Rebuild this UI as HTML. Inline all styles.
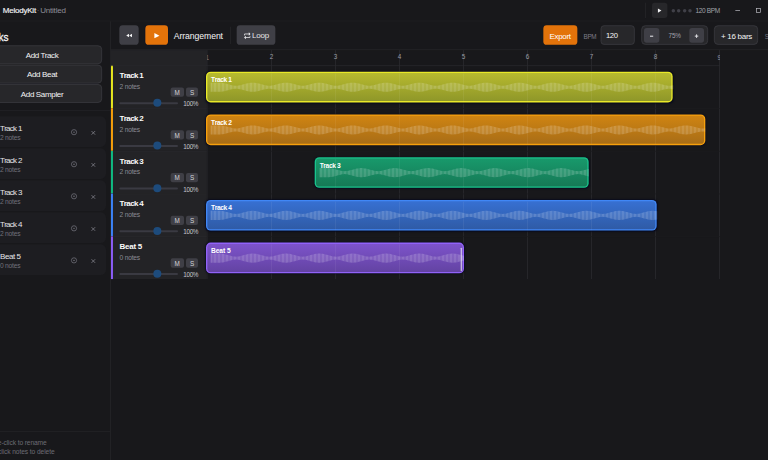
<!DOCTYPE html>
<html lang="en"><head><meta charset="utf-8"><title>MelodyKit - Untitled</title>
<style>
html,body{margin:0;padding:0;width:768px;height:460px;overflow:hidden;background:#18181b;}
#stage{position:absolute;left:0;top:0;width:1152px;height:689px;transform:scale(0.666667,0.667634);transform-origin:0 0;background:#18181b;overflow:hidden;font-family:"Liberation Sans", sans-serif;font-kerning:none;}
.a{position:absolute;}
.t{position:absolute;line-height:1;white-space:nowrap;}
</style></head><body><div id="stage">
<div class="a" style="left:0px;top:0px;width:1152px;height:32px;background:#18181b;"></div>
<div class="a" style="left:0px;top:31px;width:1152px;height:1px;background:#212125;"></div>
<div class="a" style="left:967.7px;top:4px;width:1px;height:23px;background:#27272a;"></div>
<div class="a" style="left:978px;top:4.3px;width:22.6px;height:22.3px;background:#27272a;border-radius:4px;"></div>
<svg class="a" style="left:986.3px;top:12.3px" width="7" height="8" viewBox="0 0 7 8"><path d="M0.8 0.6 L6.2 3.8 L0.8 7Z" fill="#f4f4f5"/></svg>
<svg class="a" style="left:1005.8px;top:12px" width="8" height="8"><circle cx="4" cy="4" r="2.6" fill="#404048"/></svg>
<svg class="a" style="left:1014.2px;top:12px" width="8" height="8"><circle cx="4" cy="4" r="2.6" fill="#404048"/></svg>
<svg class="a" style="left:1022.5px;top:12px" width="8" height="8"><circle cx="4" cy="4" r="2.6" fill="#404048"/></svg>
<svg class="a" style="left:1030.8px;top:12px" width="8" height="8"><circle cx="4" cy="4" r="2.6" fill="#404048"/></svg>
<div class="a" style="left:1102.5px;top:15.3px;width:7.5px;height:1.2px;background:#c0c0c8;"></div>
<div class="a" style="left:1133.7px;top:12px;width:7.6px;height:7.4px;border:1.3px solid #c0c0c8;box-sizing:border-box;"></div>
<div class="a" style="left:165px;top:32px;width:1px;height:658px;background:#27272a;"></div>
<div class="a" style="left:-26px;top:67.5px;width:178.5px;height:28.5px;background:#27272a;border:1px solid #3f3f46;border-radius:6px;box-sizing:border-box;"></div>
<div class="a" style="left:-26px;top:96.5px;width:178.5px;height:28.5px;background:#27272a;border:1px solid #3f3f46;border-radius:6px;box-sizing:border-box;"></div>
<div class="a" style="left:-26px;top:125.5px;width:178.5px;height:28.5px;background:#27272a;border:1px solid #3f3f46;border-radius:6px;box-sizing:border-box;"></div>
<div class="a" style="left:0px;top:165px;width:165px;height:1px;background:#232327;"></div>
<div class="a" style="left:-30px;top:174.4px;width:188.8px;height:46px;background:#1d1d21;border-radius:8px;"></div>
<svg class="a" style="left:105px;top:192px" width="12" height="12" viewBox="0 0 12 12"><circle cx="6" cy="6" r="3.9" fill="none" stroke="#7c7c86" stroke-width="1"/><circle cx="6" cy="6" r="1" fill="#7c7c86"/></svg>
<svg class="a" style="left:135.2px;top:194.2px" width="10" height="10" viewBox="0 0 10 10"><path d="M2.3 2.3L7.7 7.7M7.7 2.3L2.3 7.7" stroke="#8a8a94" stroke-width="1.1" fill="none"/></svg>
<div class="a" style="left:-30px;top:222.4px;width:188.8px;height:46px;background:#1d1d21;border-radius:8px;"></div>
<svg class="a" style="left:105px;top:240px" width="12" height="12" viewBox="0 0 12 12"><circle cx="6" cy="6" r="3.9" fill="none" stroke="#7c7c86" stroke-width="1"/><circle cx="6" cy="6" r="1" fill="#7c7c86"/></svg>
<svg class="a" style="left:135.2px;top:242.2px" width="10" height="10" viewBox="0 0 10 10"><path d="M2.3 2.3L7.7 7.7M7.7 2.3L2.3 7.7" stroke="#8a8a94" stroke-width="1.1" fill="none"/></svg>
<div class="a" style="left:-30px;top:270.4px;width:188.8px;height:46px;background:#1d1d21;border-radius:8px;"></div>
<svg class="a" style="left:105px;top:288px" width="12" height="12" viewBox="0 0 12 12"><circle cx="6" cy="6" r="3.9" fill="none" stroke="#7c7c86" stroke-width="1"/><circle cx="6" cy="6" r="1" fill="#7c7c86"/></svg>
<svg class="a" style="left:135.2px;top:290.2px" width="10" height="10" viewBox="0 0 10 10"><path d="M2.3 2.3L7.7 7.7M7.7 2.3L2.3 7.7" stroke="#8a8a94" stroke-width="1.1" fill="none"/></svg>
<div class="a" style="left:-30px;top:318.4px;width:188.8px;height:46px;background:#1d1d21;border-radius:8px;"></div>
<svg class="a" style="left:105px;top:336px" width="12" height="12" viewBox="0 0 12 12"><circle cx="6" cy="6" r="3.9" fill="none" stroke="#7c7c86" stroke-width="1"/><circle cx="6" cy="6" r="1" fill="#7c7c86"/></svg>
<svg class="a" style="left:135.2px;top:338.2px" width="10" height="10" viewBox="0 0 10 10"><path d="M2.3 2.3L7.7 7.7M7.7 2.3L2.3 7.7" stroke="#8a8a94" stroke-width="1.1" fill="none"/></svg>
<div class="a" style="left:-30px;top:366.4px;width:188.8px;height:46px;background:#1d1d21;border-radius:8px;"></div>
<svg class="a" style="left:105px;top:384px" width="12" height="12" viewBox="0 0 12 12"><circle cx="6" cy="6" r="3.9" fill="none" stroke="#7c7c86" stroke-width="1"/><circle cx="6" cy="6" r="1" fill="#7c7c86"/></svg>
<svg class="a" style="left:135.2px;top:386.2px" width="10" height="10" viewBox="0 0 10 10"><path d="M2.3 2.3L7.7 7.7M7.7 2.3L2.3 7.7" stroke="#8a8a94" stroke-width="1.1" fill="none"/></svg>
<div class="a" style="left:0px;top:646px;width:165px;height:1px;background:#242428;"></div>
<div class="a" style="left:166px;top:73.6px;width:986px;height:1px;background:#27272a;"></div>
<div class="a" style="left:178.6px;top:38.4px;width:29.8px;height:29px;background:#3f3f46;border-radius:5px;"></div>
<svg class="a" style="left:188.6px;top:49.9px" width="9.4" height="6.4" viewBox="0 0 11 7"><path d="M5.3 0.3V6.7L0.4 3.5Z M10.6 0.3V6.7L5.7 3.5Z" fill="#f4f4f5"/></svg>
<div class="a" style="left:217.5px;top:38.4px;width:34.5px;height:29px;background:#e3730a;border-radius:5px;box-shadow:0 0 0 1px #101424;"></div>
<svg class="a" style="left:230.5px;top:48.8px" width="9" height="9" viewBox="0 0 9 9"><path d="M0.6 0.6 L8.2 4.5 L0.6 8.4Z" fill="#fff"/></svg>
<div class="a" style="left:345.2px;top:40px;width:1px;height:26px;background:#27272a;"></div>
<div class="a" style="left:355.4px;top:38.4px;width:57.2px;height:29px;background:#3f3f46;border-radius:5px;"></div>
<svg class="a" style="left:366.2px;top:47.6px" width="10" height="11" viewBox="0 0 10 10" preserveAspectRatio="none"><g fill="none" stroke="#ededf0" stroke-width="1.1"><path d="M0.8 4.6V2.6H7.6"/><path d="M9.2 5.4V7.4H2.4"/></g><path d="M7.2 0.3L9.9 2.6L7.2 4.9Z M2.8 5.1L0.1 7.4L2.8 9.7Z" fill="#ededf0"/></svg>
<div class="a" style="left:814.5px;top:38.2px;width:51.6px;height:29.3px;background:#e3730a;border-radius:5px;"></div>
<div class="a" style="left:901px;top:38.2px;width:51px;height:29.3px;background:#27272a;border:1px solid #3f3f46;border-radius:5px;box-sizing:border-box;"></div>
<div class="a" style="left:962px;top:38.2px;width:99.6px;height:29.3px;background:#27272a;border:1px solid #3f3f46;border-radius:6px;box-sizing:border-box;"></div>
<div class="a" style="left:966.4px;top:42px;width:22.2px;height:22px;background:#3f3f46;border-radius:4px;"></div>
<div class="a" style="left:1033.6px;top:42px;width:22.4px;height:22px;background:#3f3f46;border-radius:4px;"></div>
<svg class="a" style="left:972px;top:48px" width="12" height="12"><rect x="3" y="5.4" width="4.8" height="1.7" fill="#d8d8dc"/></svg>
<svg class="a" style="left:1039px;top:48px" width="12" height="12"><rect x="3.2" y="5.3" width="5.2" height="1.6" fill="#d8d8dc"/><rect x="5" y="3.5" width="1.6" height="5.2" fill="#d8d8dc"/></svg>
<div class="a" style="left:1071.3px;top:38.2px;width:65.8px;height:29.3px;background:#27272a;border:1px solid #3f3f46;border-radius:6px;box-sizing:border-box;"></div>
<div class="a" style="left:166px;top:75px;width:144px;height:23px;background:#232326;"></div>
<div class="a" style="left:310px;top:75px;width:1px;height:343px;background:#2f2f35;"></div>
<div class="a" style="left:311px;top:75px;width:20px;height:23px;overflow:hidden"><span class="t" style="left:-2.6px;top:6.68px;font-size:9.5px;color:#9c9ca6">1</span></div>
<div class="a" style="left:407px;top:75px;width:1px;height:343px;background:#2d2d32;"></div>
<div class="a" style="left:503px;top:75px;width:1px;height:343px;background:#2d2d32;"></div>
<div class="a" style="left:599px;top:75px;width:1px;height:343px;background:#2d2d32;"></div>
<div class="a" style="left:695px;top:75px;width:1px;height:343px;background:#2d2d32;"></div>
<div class="a" style="left:791px;top:75px;width:1px;height:343px;background:#2d2d32;"></div>
<div class="a" style="left:887px;top:75px;width:1px;height:343px;background:#2d2d32;"></div>
<div class="a" style="left:983px;top:75px;width:1px;height:343px;background:#2d2d32;"></div>
<div class="a" style="left:1079px;top:75px;width:1px;height:343px;background:#2d2d32;"></div>
<div class="a" style="left:1059px;top:75px;width:20.6px;height:23px;overflow:hidden"><span class="t" style="left:17.4px;top:6.68px;font-size:9.5px;color:#9c9ca6">9</span></div>
<svg width="0" height="0" style="position:absolute"><defs><pattern id="st" width="2" height="40" patternUnits="userSpaceOnUse"><rect x="0" y="0" width="1.15" height="40" fill="#fff" fill-opacity="0.24"/><rect x="1.15" y="0" width="0.85" height="40" fill="#fff" fill-opacity="0.06"/></pattern></defs></svg>
<div class="a" style="left:166px;top:98px;width:144px;height:64px;background:#232326;"></div>
<div class="a" style="left:166px;top:98px;width:3px;height:64px;background:#e6e61f;transform:translateX(0.45px);"></div>
<div class="a" style="left:166px;top:98px;width:914px;height:1px;background:#2b2b30;"></div>
<div class="a" style="left:256px;top:131.3px;width:19.7px;height:14.2px;background:#3f3f46;border-radius:3px;"></div>
<div class="a" style="left:279.4px;top:131.3px;width:17.8px;height:14.2px;background:#3f3f46;border-radius:3px;"></div>
<div class="a" style="left:179.4px;top:152.6px;width:87.6px;height:3px;background:#3a3a42;border-radius:2px;"></div>
<div class="a" style="left:230.3px;top:148.4px;width:11.4px;height:11.4px;background:#1d4b7c;border-radius:6px;"></div>
<div class="a" style="left:309px;top:108px;width:700px;height:46px;border-radius:7px;background:#e9e928;box-shadow:0 0.5px 2px 0.5px rgba(6,8,30,0.75);transform:translateY(-0.6px);"></div>
<div class="a" style="left:311px;top:110px;width:696px;height:42px;border-radius:5px;background:linear-gradient(to bottom,#b7ba2f,#8f9729);transform:translateY(-0.6px);"></div>
<svg class="a" style="left:309px;top:108px;overflow:visible" width="703" height="46" viewBox="0 0 703 46"><path d="M7.0 15.80 L9.0 15.80 L11.0 15.80 L13.0 15.80 L15.0 15.80 L17.0 15.80 L19.0 15.80 L21.0 15.82 L23.0 15.95 L25.0 16.20 L27.0 16.56 L29.0 17.01 L31.0 17.52 L33.0 18.07 L35.0 18.63 L37.0 19.16 L39.0 19.64 L41.0 20.02 L43.0 20.29 L45.0 20.40 L47.0 20.29 L49.0 20.02 L51.0 19.64 L53.0 19.16 L55.0 18.63 L57.0 18.07 L59.0 17.52 L61.0 17.01 L63.0 16.56 L65.0 16.20 L67.0 15.95 L69.0 15.82 L71.0 15.82 L73.0 15.95 L75.0 16.20 L77.0 16.56 L79.0 17.01 L81.0 17.52 L83.0 18.07 L85.0 18.63 L87.0 19.16 L89.0 19.64 L91.0 20.02 L93.0 20.29 L95.0 20.40 L97.0 20.29 L99.0 20.02 L101.0 19.64 L103.0 19.16 L105.0 18.63 L107.0 18.07 L109.0 17.52 L111.0 17.01 L113.0 16.56 L115.0 16.20 L117.0 15.95 L119.0 15.82 L121.0 15.82 L123.0 15.95 L125.0 16.20 L127.0 16.56 L129.0 17.01 L131.0 17.52 L133.0 18.07 L135.0 18.63 L137.0 19.16 L139.0 19.64 L141.0 20.02 L143.0 20.29 L145.0 20.40 L147.0 20.29 L149.0 20.02 L151.0 19.64 L153.0 19.16 L155.0 18.63 L157.0 18.07 L159.0 17.52 L161.0 17.01 L163.0 16.56 L165.0 16.20 L167.0 15.95 L169.0 15.82 L171.0 15.82 L173.0 15.95 L175.0 16.20 L177.0 16.56 L179.0 17.01 L181.0 17.52 L183.0 18.07 L185.0 18.63 L187.0 19.16 L189.0 19.64 L191.0 20.02 L193.0 20.29 L195.0 20.40 L197.0 20.29 L199.0 20.02 L201.0 19.64 L203.0 19.16 L205.0 18.63 L207.0 18.07 L209.0 17.52 L211.0 17.01 L213.0 16.56 L215.0 16.20 L217.0 15.95 L219.0 15.82 L221.0 15.82 L223.0 15.95 L225.0 16.20 L227.0 16.56 L229.0 17.01 L231.0 17.52 L233.0 18.07 L235.0 18.63 L237.0 19.16 L239.0 19.64 L241.0 20.02 L243.0 20.29 L245.0 20.40 L247.0 20.29 L249.0 20.02 L251.0 19.64 L253.0 19.16 L255.0 18.63 L257.0 18.07 L259.0 17.52 L261.0 17.01 L263.0 16.56 L265.0 16.20 L267.0 15.95 L269.0 15.82 L271.0 15.82 L273.0 15.95 L275.0 16.20 L277.0 16.56 L279.0 17.01 L281.0 17.52 L283.0 18.07 L285.0 18.63 L287.0 19.16 L289.0 19.64 L291.0 20.02 L293.0 20.29 L295.0 20.40 L297.0 20.29 L299.0 20.02 L301.0 19.64 L303.0 19.16 L305.0 18.63 L307.0 18.07 L309.0 17.52 L311.0 17.01 L313.0 16.56 L315.0 16.20 L317.0 15.95 L319.0 15.82 L321.0 15.82 L323.0 15.95 L325.0 16.20 L327.0 16.56 L329.0 17.01 L331.0 17.52 L333.0 18.07 L335.0 18.63 L337.0 19.16 L339.0 19.64 L341.0 20.02 L343.0 20.29 L345.0 20.40 L347.0 20.29 L349.0 20.02 L351.0 19.64 L353.0 19.16 L355.0 18.63 L357.0 18.07 L359.0 17.52 L361.0 17.01 L363.0 16.56 L365.0 16.20 L367.0 15.95 L369.0 15.82 L371.0 15.82 L373.0 15.95 L375.0 16.20 L377.0 16.56 L379.0 17.01 L381.0 17.52 L383.0 18.07 L385.0 18.63 L387.0 19.16 L389.0 19.64 L391.0 20.02 L393.0 20.29 L395.0 20.40 L397.0 20.29 L399.0 20.02 L401.0 19.64 L403.0 19.16 L405.0 18.63 L407.0 18.07 L409.0 17.52 L411.0 17.01 L413.0 16.56 L415.0 16.20 L417.0 15.95 L419.0 15.82 L421.0 15.82 L423.0 15.95 L425.0 16.20 L427.0 16.56 L429.0 17.01 L431.0 17.52 L433.0 18.07 L435.0 18.63 L437.0 19.16 L439.0 19.64 L441.0 20.02 L443.0 20.29 L445.0 20.40 L447.0 20.29 L449.0 20.02 L451.0 19.64 L453.0 19.16 L455.0 18.63 L457.0 18.07 L459.0 17.52 L461.0 17.01 L463.0 16.56 L465.0 16.20 L467.0 15.95 L469.0 15.82 L471.0 15.82 L473.0 15.95 L475.0 16.20 L477.0 16.56 L479.0 17.01 L481.0 17.52 L483.0 18.07 L485.0 18.63 L487.0 19.16 L489.0 19.64 L491.0 20.02 L493.0 20.29 L495.0 20.40 L497.0 20.29 L499.0 20.02 L501.0 19.64 L503.0 19.16 L505.0 18.63 L507.0 18.07 L509.0 17.52 L511.0 17.01 L513.0 16.56 L515.0 16.20 L517.0 15.95 L519.0 15.82 L521.0 15.82 L523.0 15.95 L525.0 16.20 L527.0 16.56 L529.0 17.01 L531.0 17.52 L533.0 18.07 L535.0 18.63 L537.0 19.16 L539.0 19.64 L541.0 20.02 L543.0 20.29 L545.0 20.40 L547.0 20.29 L549.0 20.02 L551.0 19.64 L553.0 19.16 L555.0 18.63 L557.0 18.07 L559.0 17.52 L561.0 17.01 L563.0 16.56 L565.0 16.20 L567.0 15.95 L569.0 15.82 L571.0 15.82 L573.0 15.95 L575.0 16.20 L577.0 16.56 L579.0 17.01 L581.0 17.52 L583.0 18.07 L585.0 18.63 L587.0 19.16 L589.0 19.64 L591.0 20.02 L593.0 20.29 L595.0 20.40 L597.0 20.29 L599.0 20.02 L601.0 19.64 L603.0 19.16 L605.0 18.63 L607.0 18.07 L609.0 17.52 L611.0 17.01 L613.0 16.56 L615.0 16.20 L617.0 15.95 L619.0 15.82 L621.0 15.82 L623.0 15.95 L625.0 16.20 L627.0 16.56 L629.0 17.01 L631.0 17.52 L633.0 18.07 L635.0 18.63 L637.0 19.16 L639.0 19.64 L641.0 20.02 L643.0 20.29 L645.0 20.40 L647.0 20.29 L649.0 20.02 L651.0 19.64 L653.0 19.16 L655.0 18.63 L657.0 18.07 L659.0 17.52 L661.0 17.01 L663.0 16.56 L665.0 16.20 L667.0 15.95 L669.0 15.82 L671.0 15.82 L673.0 15.95 L675.0 16.20 L677.0 16.56 L679.0 17.01 L681.0 17.52 L683.0 18.07 L685.0 18.63 L687.0 19.16 L689.0 19.64 L691.0 20.02 L693.0 20.29 L695.0 20.40 L697.0 20.29 L699.0 20.02 L701.0 19.64 L701.0 25.56 L699.0 25.18 L697.0 24.91 L695.0 24.80 L693.0 24.91 L691.0 25.18 L689.0 25.56 L687.0 26.04 L685.0 26.57 L683.0 27.13 L681.0 27.68 L679.0 28.19 L677.0 28.64 L675.0 29.00 L673.0 29.25 L671.0 29.38 L669.0 29.38 L667.0 29.25 L665.0 29.00 L663.0 28.64 L661.0 28.19 L659.0 27.68 L657.0 27.13 L655.0 26.57 L653.0 26.04 L651.0 25.56 L649.0 25.18 L647.0 24.91 L645.0 24.80 L643.0 24.91 L641.0 25.18 L639.0 25.56 L637.0 26.04 L635.0 26.57 L633.0 27.13 L631.0 27.68 L629.0 28.19 L627.0 28.64 L625.0 29.00 L623.0 29.25 L621.0 29.38 L619.0 29.38 L617.0 29.25 L615.0 29.00 L613.0 28.64 L611.0 28.19 L609.0 27.68 L607.0 27.13 L605.0 26.57 L603.0 26.04 L601.0 25.56 L599.0 25.18 L597.0 24.91 L595.0 24.80 L593.0 24.91 L591.0 25.18 L589.0 25.56 L587.0 26.04 L585.0 26.57 L583.0 27.13 L581.0 27.68 L579.0 28.19 L577.0 28.64 L575.0 29.00 L573.0 29.25 L571.0 29.38 L569.0 29.38 L567.0 29.25 L565.0 29.00 L563.0 28.64 L561.0 28.19 L559.0 27.68 L557.0 27.13 L555.0 26.57 L553.0 26.04 L551.0 25.56 L549.0 25.18 L547.0 24.91 L545.0 24.80 L543.0 24.91 L541.0 25.18 L539.0 25.56 L537.0 26.04 L535.0 26.57 L533.0 27.13 L531.0 27.68 L529.0 28.19 L527.0 28.64 L525.0 29.00 L523.0 29.25 L521.0 29.38 L519.0 29.38 L517.0 29.25 L515.0 29.00 L513.0 28.64 L511.0 28.19 L509.0 27.68 L507.0 27.13 L505.0 26.57 L503.0 26.04 L501.0 25.56 L499.0 25.18 L497.0 24.91 L495.0 24.80 L493.0 24.91 L491.0 25.18 L489.0 25.56 L487.0 26.04 L485.0 26.57 L483.0 27.13 L481.0 27.68 L479.0 28.19 L477.0 28.64 L475.0 29.00 L473.0 29.25 L471.0 29.38 L469.0 29.38 L467.0 29.25 L465.0 29.00 L463.0 28.64 L461.0 28.19 L459.0 27.68 L457.0 27.13 L455.0 26.57 L453.0 26.04 L451.0 25.56 L449.0 25.18 L447.0 24.91 L445.0 24.80 L443.0 24.91 L441.0 25.18 L439.0 25.56 L437.0 26.04 L435.0 26.57 L433.0 27.13 L431.0 27.68 L429.0 28.19 L427.0 28.64 L425.0 29.00 L423.0 29.25 L421.0 29.38 L419.0 29.38 L417.0 29.25 L415.0 29.00 L413.0 28.64 L411.0 28.19 L409.0 27.68 L407.0 27.13 L405.0 26.57 L403.0 26.04 L401.0 25.56 L399.0 25.18 L397.0 24.91 L395.0 24.80 L393.0 24.91 L391.0 25.18 L389.0 25.56 L387.0 26.04 L385.0 26.57 L383.0 27.13 L381.0 27.68 L379.0 28.19 L377.0 28.64 L375.0 29.00 L373.0 29.25 L371.0 29.38 L369.0 29.38 L367.0 29.25 L365.0 29.00 L363.0 28.64 L361.0 28.19 L359.0 27.68 L357.0 27.13 L355.0 26.57 L353.0 26.04 L351.0 25.56 L349.0 25.18 L347.0 24.91 L345.0 24.80 L343.0 24.91 L341.0 25.18 L339.0 25.56 L337.0 26.04 L335.0 26.57 L333.0 27.13 L331.0 27.68 L329.0 28.19 L327.0 28.64 L325.0 29.00 L323.0 29.25 L321.0 29.38 L319.0 29.38 L317.0 29.25 L315.0 29.00 L313.0 28.64 L311.0 28.19 L309.0 27.68 L307.0 27.13 L305.0 26.57 L303.0 26.04 L301.0 25.56 L299.0 25.18 L297.0 24.91 L295.0 24.80 L293.0 24.91 L291.0 25.18 L289.0 25.56 L287.0 26.04 L285.0 26.57 L283.0 27.13 L281.0 27.68 L279.0 28.19 L277.0 28.64 L275.0 29.00 L273.0 29.25 L271.0 29.38 L269.0 29.38 L267.0 29.25 L265.0 29.00 L263.0 28.64 L261.0 28.19 L259.0 27.68 L257.0 27.13 L255.0 26.57 L253.0 26.04 L251.0 25.56 L249.0 25.18 L247.0 24.91 L245.0 24.80 L243.0 24.91 L241.0 25.18 L239.0 25.56 L237.0 26.04 L235.0 26.57 L233.0 27.13 L231.0 27.68 L229.0 28.19 L227.0 28.64 L225.0 29.00 L223.0 29.25 L221.0 29.38 L219.0 29.38 L217.0 29.25 L215.0 29.00 L213.0 28.64 L211.0 28.19 L209.0 27.68 L207.0 27.13 L205.0 26.57 L203.0 26.04 L201.0 25.56 L199.0 25.18 L197.0 24.91 L195.0 24.80 L193.0 24.91 L191.0 25.18 L189.0 25.56 L187.0 26.04 L185.0 26.57 L183.0 27.13 L181.0 27.68 L179.0 28.19 L177.0 28.64 L175.0 29.00 L173.0 29.25 L171.0 29.38 L169.0 29.38 L167.0 29.25 L165.0 29.00 L163.0 28.64 L161.0 28.19 L159.0 27.68 L157.0 27.13 L155.0 26.57 L153.0 26.04 L151.0 25.56 L149.0 25.18 L147.0 24.91 L145.0 24.80 L143.0 24.91 L141.0 25.18 L139.0 25.56 L137.0 26.04 L135.0 26.57 L133.0 27.13 L131.0 27.68 L129.0 28.19 L127.0 28.64 L125.0 29.00 L123.0 29.25 L121.0 29.38 L119.0 29.38 L117.0 29.25 L115.0 29.00 L113.0 28.64 L111.0 28.19 L109.0 27.68 L107.0 27.13 L105.0 26.57 L103.0 26.04 L101.0 25.56 L99.0 25.18 L97.0 24.91 L95.0 24.80 L93.0 24.91 L91.0 25.18 L89.0 25.56 L87.0 26.04 L85.0 26.57 L83.0 27.13 L81.0 27.68 L79.0 28.19 L77.0 28.64 L75.0 29.00 L73.0 29.25 L71.0 29.38 L69.0 29.38 L67.0 29.25 L65.0 29.00 L63.0 28.64 L61.0 28.19 L59.0 27.68 L57.0 27.13 L55.0 26.57 L53.0 26.04 L51.0 25.56 L49.0 25.18 L47.0 24.91 L45.0 24.80 L43.0 24.91 L41.0 25.18 L39.0 25.56 L37.0 26.04 L35.0 26.57 L33.0 27.13 L31.0 27.68 L29.0 28.19 L27.0 28.64 L25.0 29.00 L23.0 29.25 L21.0 29.38 L19.0 29.40 L17.0 29.40 L15.0 29.40 L13.0 29.40 L11.0 29.40 L9.0 29.40 L7.0 29.40Z" fill="url(#st)"/></svg>
<div class="a" style="left:407px;top:110px;width:1px;height:42px;background:rgba(255,255,255,0.09);"></div>
<div class="a" style="left:503px;top:110px;width:1px;height:42px;background:rgba(255,255,255,0.09);"></div>
<div class="a" style="left:599px;top:110px;width:1px;height:42px;background:rgba(255,255,255,0.09);"></div>
<div class="a" style="left:695px;top:110px;width:1px;height:42px;background:rgba(255,255,255,0.09);"></div>
<div class="a" style="left:791px;top:110px;width:1px;height:42px;background:rgba(255,255,255,0.09);"></div>
<div class="a" style="left:887px;top:110px;width:1px;height:42px;background:rgba(255,255,255,0.09);"></div>
<div class="a" style="left:983px;top:110px;width:1px;height:42px;background:rgba(255,255,255,0.09);"></div>
<div class="a" style="left:166px;top:162px;width:144px;height:64px;background:#232326;"></div>
<div class="a" style="left:166px;top:162px;width:3px;height:64px;background:#f59e0b;transform:translateX(0.45px);"></div>
<div class="a" style="left:170px;top:162px;width:140px;height:1px;background:#29292d;"></div>
<div class="a" style="left:312px;top:162px;width:768px;height:1px;background:#1b1b1e;"></div>
<div class="a" style="left:256px;top:195.3px;width:19.7px;height:14.2px;background:#3f3f46;border-radius:3px;"></div>
<div class="a" style="left:279.4px;top:195.3px;width:17.8px;height:14.2px;background:#3f3f46;border-radius:3px;"></div>
<div class="a" style="left:179.4px;top:216.6px;width:87.6px;height:3px;background:#3a3a42;border-radius:2px;"></div>
<div class="a" style="left:230.3px;top:212.4px;width:11.4px;height:11.4px;background:#1d4b7c;border-radius:6px;"></div>
<div class="a" style="left:309px;top:172px;width:749px;height:46px;border-radius:7px;background:#f7a00c;box-shadow:0 0.5px 2px 0.5px rgba(6,8,30,0.75);transform:translateY(-0.6px);"></div>
<div class="a" style="left:311px;top:174px;width:745px;height:42px;border-radius:5px;background:linear-gradient(to bottom,#cf8412,#a86d17);transform:translateY(-0.6px);"></div>
<svg class="a" style="left:309px;top:172px;overflow:visible" width="752" height="46" viewBox="0 0 752 46"><path d="M7.0 15.80 L9.0 15.80 L11.0 15.80 L13.0 15.80 L15.0 15.80 L17.0 15.80 L19.0 15.80 L21.0 15.82 L23.0 15.95 L25.0 16.20 L27.0 16.56 L29.0 17.01 L31.0 17.52 L33.0 18.07 L35.0 18.63 L37.0 19.16 L39.0 19.64 L41.0 20.02 L43.0 20.29 L45.0 20.40 L47.0 20.29 L49.0 20.02 L51.0 19.64 L53.0 19.16 L55.0 18.63 L57.0 18.07 L59.0 17.52 L61.0 17.01 L63.0 16.56 L65.0 16.20 L67.0 15.95 L69.0 15.82 L71.0 15.82 L73.0 15.95 L75.0 16.20 L77.0 16.56 L79.0 17.01 L81.0 17.52 L83.0 18.07 L85.0 18.63 L87.0 19.16 L89.0 19.64 L91.0 20.02 L93.0 20.29 L95.0 20.40 L97.0 20.29 L99.0 20.02 L101.0 19.64 L103.0 19.16 L105.0 18.63 L107.0 18.07 L109.0 17.52 L111.0 17.01 L113.0 16.56 L115.0 16.20 L117.0 15.95 L119.0 15.82 L121.0 15.82 L123.0 15.95 L125.0 16.20 L127.0 16.56 L129.0 17.01 L131.0 17.52 L133.0 18.07 L135.0 18.63 L137.0 19.16 L139.0 19.64 L141.0 20.02 L143.0 20.29 L145.0 20.40 L147.0 20.29 L149.0 20.02 L151.0 19.64 L153.0 19.16 L155.0 18.63 L157.0 18.07 L159.0 17.52 L161.0 17.01 L163.0 16.56 L165.0 16.20 L167.0 15.95 L169.0 15.82 L171.0 15.82 L173.0 15.95 L175.0 16.20 L177.0 16.56 L179.0 17.01 L181.0 17.52 L183.0 18.07 L185.0 18.63 L187.0 19.16 L189.0 19.64 L191.0 20.02 L193.0 20.29 L195.0 20.40 L197.0 20.29 L199.0 20.02 L201.0 19.64 L203.0 19.16 L205.0 18.63 L207.0 18.07 L209.0 17.52 L211.0 17.01 L213.0 16.56 L215.0 16.20 L217.0 15.95 L219.0 15.82 L221.0 15.82 L223.0 15.95 L225.0 16.20 L227.0 16.56 L229.0 17.01 L231.0 17.52 L233.0 18.07 L235.0 18.63 L237.0 19.16 L239.0 19.64 L241.0 20.02 L243.0 20.29 L245.0 20.40 L247.0 20.29 L249.0 20.02 L251.0 19.64 L253.0 19.16 L255.0 18.63 L257.0 18.07 L259.0 17.52 L261.0 17.01 L263.0 16.56 L265.0 16.20 L267.0 15.95 L269.0 15.82 L271.0 15.82 L273.0 15.95 L275.0 16.20 L277.0 16.56 L279.0 17.01 L281.0 17.52 L283.0 18.07 L285.0 18.63 L287.0 19.16 L289.0 19.64 L291.0 20.02 L293.0 20.29 L295.0 20.40 L297.0 20.29 L299.0 20.02 L301.0 19.64 L303.0 19.16 L305.0 18.63 L307.0 18.07 L309.0 17.52 L311.0 17.01 L313.0 16.56 L315.0 16.20 L317.0 15.95 L319.0 15.82 L321.0 15.82 L323.0 15.95 L325.0 16.20 L327.0 16.56 L329.0 17.01 L331.0 17.52 L333.0 18.07 L335.0 18.63 L337.0 19.16 L339.0 19.64 L341.0 20.02 L343.0 20.29 L345.0 20.40 L347.0 20.29 L349.0 20.02 L351.0 19.64 L353.0 19.16 L355.0 18.63 L357.0 18.07 L359.0 17.52 L361.0 17.01 L363.0 16.56 L365.0 16.20 L367.0 15.95 L369.0 15.82 L371.0 15.82 L373.0 15.95 L375.0 16.20 L377.0 16.56 L379.0 17.01 L381.0 17.52 L383.0 18.07 L385.0 18.63 L387.0 19.16 L389.0 19.64 L391.0 20.02 L393.0 20.29 L395.0 20.40 L397.0 20.29 L399.0 20.02 L401.0 19.64 L403.0 19.16 L405.0 18.63 L407.0 18.07 L409.0 17.52 L411.0 17.01 L413.0 16.56 L415.0 16.20 L417.0 15.95 L419.0 15.82 L421.0 15.82 L423.0 15.95 L425.0 16.20 L427.0 16.56 L429.0 17.01 L431.0 17.52 L433.0 18.07 L435.0 18.63 L437.0 19.16 L439.0 19.64 L441.0 20.02 L443.0 20.29 L445.0 20.40 L447.0 20.29 L449.0 20.02 L451.0 19.64 L453.0 19.16 L455.0 18.63 L457.0 18.07 L459.0 17.52 L461.0 17.01 L463.0 16.56 L465.0 16.20 L467.0 15.95 L469.0 15.82 L471.0 15.82 L473.0 15.95 L475.0 16.20 L477.0 16.56 L479.0 17.01 L481.0 17.52 L483.0 18.07 L485.0 18.63 L487.0 19.16 L489.0 19.64 L491.0 20.02 L493.0 20.29 L495.0 20.40 L497.0 20.29 L499.0 20.02 L501.0 19.64 L503.0 19.16 L505.0 18.63 L507.0 18.07 L509.0 17.52 L511.0 17.01 L513.0 16.56 L515.0 16.20 L517.0 15.95 L519.0 15.82 L521.0 15.82 L523.0 15.95 L525.0 16.20 L527.0 16.56 L529.0 17.01 L531.0 17.52 L533.0 18.07 L535.0 18.63 L537.0 19.16 L539.0 19.64 L541.0 20.02 L543.0 20.29 L545.0 20.40 L547.0 20.29 L549.0 20.02 L551.0 19.64 L553.0 19.16 L555.0 18.63 L557.0 18.07 L559.0 17.52 L561.0 17.01 L563.0 16.56 L565.0 16.20 L567.0 15.95 L569.0 15.82 L571.0 15.82 L573.0 15.95 L575.0 16.20 L577.0 16.56 L579.0 17.01 L581.0 17.52 L583.0 18.07 L585.0 18.63 L587.0 19.16 L589.0 19.64 L591.0 20.02 L593.0 20.29 L595.0 20.40 L597.0 20.29 L599.0 20.02 L601.0 19.64 L603.0 19.16 L605.0 18.63 L607.0 18.07 L609.0 17.52 L611.0 17.01 L613.0 16.56 L615.0 16.20 L617.0 15.95 L619.0 15.82 L621.0 15.82 L623.0 15.95 L625.0 16.20 L627.0 16.56 L629.0 17.01 L631.0 17.52 L633.0 18.07 L635.0 18.63 L637.0 19.16 L639.0 19.64 L641.0 20.02 L643.0 20.29 L645.0 20.40 L647.0 20.29 L649.0 20.02 L651.0 19.64 L653.0 19.16 L655.0 18.63 L657.0 18.07 L659.0 17.52 L661.0 17.01 L663.0 16.56 L665.0 16.20 L667.0 15.95 L669.0 15.82 L671.0 15.82 L673.0 15.95 L675.0 16.20 L677.0 16.56 L679.0 17.01 L681.0 17.52 L683.0 18.07 L685.0 18.63 L687.0 19.16 L689.0 19.64 L691.0 20.02 L693.0 20.29 L695.0 20.40 L697.0 20.29 L699.0 20.02 L701.0 19.64 L703.0 19.16 L705.0 18.63 L707.0 18.07 L709.0 17.52 L711.0 17.01 L713.0 16.56 L715.0 16.20 L717.0 15.95 L719.0 15.82 L721.0 15.82 L723.0 15.95 L725.0 16.20 L727.0 16.56 L729.0 17.01 L731.0 17.52 L733.0 18.07 L735.0 18.63 L737.0 19.16 L739.0 19.64 L741.0 20.02 L743.0 20.29 L745.0 20.40 L747.0 20.29 L749.0 20.02 L749.0 25.18 L747.0 24.91 L745.0 24.80 L743.0 24.91 L741.0 25.18 L739.0 25.56 L737.0 26.04 L735.0 26.57 L733.0 27.13 L731.0 27.68 L729.0 28.19 L727.0 28.64 L725.0 29.00 L723.0 29.25 L721.0 29.38 L719.0 29.38 L717.0 29.25 L715.0 29.00 L713.0 28.64 L711.0 28.19 L709.0 27.68 L707.0 27.13 L705.0 26.57 L703.0 26.04 L701.0 25.56 L699.0 25.18 L697.0 24.91 L695.0 24.80 L693.0 24.91 L691.0 25.18 L689.0 25.56 L687.0 26.04 L685.0 26.57 L683.0 27.13 L681.0 27.68 L679.0 28.19 L677.0 28.64 L675.0 29.00 L673.0 29.25 L671.0 29.38 L669.0 29.38 L667.0 29.25 L665.0 29.00 L663.0 28.64 L661.0 28.19 L659.0 27.68 L657.0 27.13 L655.0 26.57 L653.0 26.04 L651.0 25.56 L649.0 25.18 L647.0 24.91 L645.0 24.80 L643.0 24.91 L641.0 25.18 L639.0 25.56 L637.0 26.04 L635.0 26.57 L633.0 27.13 L631.0 27.68 L629.0 28.19 L627.0 28.64 L625.0 29.00 L623.0 29.25 L621.0 29.38 L619.0 29.38 L617.0 29.25 L615.0 29.00 L613.0 28.64 L611.0 28.19 L609.0 27.68 L607.0 27.13 L605.0 26.57 L603.0 26.04 L601.0 25.56 L599.0 25.18 L597.0 24.91 L595.0 24.80 L593.0 24.91 L591.0 25.18 L589.0 25.56 L587.0 26.04 L585.0 26.57 L583.0 27.13 L581.0 27.68 L579.0 28.19 L577.0 28.64 L575.0 29.00 L573.0 29.25 L571.0 29.38 L569.0 29.38 L567.0 29.25 L565.0 29.00 L563.0 28.64 L561.0 28.19 L559.0 27.68 L557.0 27.13 L555.0 26.57 L553.0 26.04 L551.0 25.56 L549.0 25.18 L547.0 24.91 L545.0 24.80 L543.0 24.91 L541.0 25.18 L539.0 25.56 L537.0 26.04 L535.0 26.57 L533.0 27.13 L531.0 27.68 L529.0 28.19 L527.0 28.64 L525.0 29.00 L523.0 29.25 L521.0 29.38 L519.0 29.38 L517.0 29.25 L515.0 29.00 L513.0 28.64 L511.0 28.19 L509.0 27.68 L507.0 27.13 L505.0 26.57 L503.0 26.04 L501.0 25.56 L499.0 25.18 L497.0 24.91 L495.0 24.80 L493.0 24.91 L491.0 25.18 L489.0 25.56 L487.0 26.04 L485.0 26.57 L483.0 27.13 L481.0 27.68 L479.0 28.19 L477.0 28.64 L475.0 29.00 L473.0 29.25 L471.0 29.38 L469.0 29.38 L467.0 29.25 L465.0 29.00 L463.0 28.64 L461.0 28.19 L459.0 27.68 L457.0 27.13 L455.0 26.57 L453.0 26.04 L451.0 25.56 L449.0 25.18 L447.0 24.91 L445.0 24.80 L443.0 24.91 L441.0 25.18 L439.0 25.56 L437.0 26.04 L435.0 26.57 L433.0 27.13 L431.0 27.68 L429.0 28.19 L427.0 28.64 L425.0 29.00 L423.0 29.25 L421.0 29.38 L419.0 29.38 L417.0 29.25 L415.0 29.00 L413.0 28.64 L411.0 28.19 L409.0 27.68 L407.0 27.13 L405.0 26.57 L403.0 26.04 L401.0 25.56 L399.0 25.18 L397.0 24.91 L395.0 24.80 L393.0 24.91 L391.0 25.18 L389.0 25.56 L387.0 26.04 L385.0 26.57 L383.0 27.13 L381.0 27.68 L379.0 28.19 L377.0 28.64 L375.0 29.00 L373.0 29.25 L371.0 29.38 L369.0 29.38 L367.0 29.25 L365.0 29.00 L363.0 28.64 L361.0 28.19 L359.0 27.68 L357.0 27.13 L355.0 26.57 L353.0 26.04 L351.0 25.56 L349.0 25.18 L347.0 24.91 L345.0 24.80 L343.0 24.91 L341.0 25.18 L339.0 25.56 L337.0 26.04 L335.0 26.57 L333.0 27.13 L331.0 27.68 L329.0 28.19 L327.0 28.64 L325.0 29.00 L323.0 29.25 L321.0 29.38 L319.0 29.38 L317.0 29.25 L315.0 29.00 L313.0 28.64 L311.0 28.19 L309.0 27.68 L307.0 27.13 L305.0 26.57 L303.0 26.04 L301.0 25.56 L299.0 25.18 L297.0 24.91 L295.0 24.80 L293.0 24.91 L291.0 25.18 L289.0 25.56 L287.0 26.04 L285.0 26.57 L283.0 27.13 L281.0 27.68 L279.0 28.19 L277.0 28.64 L275.0 29.00 L273.0 29.25 L271.0 29.38 L269.0 29.38 L267.0 29.25 L265.0 29.00 L263.0 28.64 L261.0 28.19 L259.0 27.68 L257.0 27.13 L255.0 26.57 L253.0 26.04 L251.0 25.56 L249.0 25.18 L247.0 24.91 L245.0 24.80 L243.0 24.91 L241.0 25.18 L239.0 25.56 L237.0 26.04 L235.0 26.57 L233.0 27.13 L231.0 27.68 L229.0 28.19 L227.0 28.64 L225.0 29.00 L223.0 29.25 L221.0 29.38 L219.0 29.38 L217.0 29.25 L215.0 29.00 L213.0 28.64 L211.0 28.19 L209.0 27.68 L207.0 27.13 L205.0 26.57 L203.0 26.04 L201.0 25.56 L199.0 25.18 L197.0 24.91 L195.0 24.80 L193.0 24.91 L191.0 25.18 L189.0 25.56 L187.0 26.04 L185.0 26.57 L183.0 27.13 L181.0 27.68 L179.0 28.19 L177.0 28.64 L175.0 29.00 L173.0 29.25 L171.0 29.38 L169.0 29.38 L167.0 29.25 L165.0 29.00 L163.0 28.64 L161.0 28.19 L159.0 27.68 L157.0 27.13 L155.0 26.57 L153.0 26.04 L151.0 25.56 L149.0 25.18 L147.0 24.91 L145.0 24.80 L143.0 24.91 L141.0 25.18 L139.0 25.56 L137.0 26.04 L135.0 26.57 L133.0 27.13 L131.0 27.68 L129.0 28.19 L127.0 28.64 L125.0 29.00 L123.0 29.25 L121.0 29.38 L119.0 29.38 L117.0 29.25 L115.0 29.00 L113.0 28.64 L111.0 28.19 L109.0 27.68 L107.0 27.13 L105.0 26.57 L103.0 26.04 L101.0 25.56 L99.0 25.18 L97.0 24.91 L95.0 24.80 L93.0 24.91 L91.0 25.18 L89.0 25.56 L87.0 26.04 L85.0 26.57 L83.0 27.13 L81.0 27.68 L79.0 28.19 L77.0 28.64 L75.0 29.00 L73.0 29.25 L71.0 29.38 L69.0 29.38 L67.0 29.25 L65.0 29.00 L63.0 28.64 L61.0 28.19 L59.0 27.68 L57.0 27.13 L55.0 26.57 L53.0 26.04 L51.0 25.56 L49.0 25.18 L47.0 24.91 L45.0 24.80 L43.0 24.91 L41.0 25.18 L39.0 25.56 L37.0 26.04 L35.0 26.57 L33.0 27.13 L31.0 27.68 L29.0 28.19 L27.0 28.64 L25.0 29.00 L23.0 29.25 L21.0 29.38 L19.0 29.40 L17.0 29.40 L15.0 29.40 L13.0 29.40 L11.0 29.40 L9.0 29.40 L7.0 29.40Z" fill="url(#st)"/></svg>
<div class="a" style="left:407px;top:174px;width:1px;height:42px;background:rgba(255,255,255,0.09);"></div>
<div class="a" style="left:503px;top:174px;width:1px;height:42px;background:rgba(255,255,255,0.09);"></div>
<div class="a" style="left:599px;top:174px;width:1px;height:42px;background:rgba(255,255,255,0.09);"></div>
<div class="a" style="left:695px;top:174px;width:1px;height:42px;background:rgba(255,255,255,0.09);"></div>
<div class="a" style="left:791px;top:174px;width:1px;height:42px;background:rgba(255,255,255,0.09);"></div>
<div class="a" style="left:887px;top:174px;width:1px;height:42px;background:rgba(255,255,255,0.09);"></div>
<div class="a" style="left:983px;top:174px;width:1px;height:42px;background:rgba(255,255,255,0.09);"></div>
<div class="a" style="left:166px;top:226px;width:144px;height:64px;background:#232326;"></div>
<div class="a" style="left:166px;top:226px;width:3px;height:64px;background:#10b981;transform:translateX(0.45px);"></div>
<div class="a" style="left:170px;top:226px;width:140px;height:1px;background:#29292d;"></div>
<div class="a" style="left:312px;top:226px;width:768px;height:1px;background:#1b1b1e;"></div>
<div class="a" style="left:256px;top:259.3px;width:19.7px;height:14.2px;background:#3f3f46;border-radius:3px;"></div>
<div class="a" style="left:279.4px;top:259.3px;width:17.8px;height:14.2px;background:#3f3f46;border-radius:3px;"></div>
<div class="a" style="left:179.4px;top:280.6px;width:87.6px;height:3px;background:#3a3a42;border-radius:2px;"></div>
<div class="a" style="left:230.3px;top:276.40000000000003px;width:11.4px;height:11.4px;background:#1d4b7c;border-radius:6px;"></div>
<div class="a" style="left:472px;top:236px;width:411px;height:46px;border-radius:7px;background:#19c48b;box-shadow:0 0.5px 2px 0.5px rgba(6,8,30,0.75);transform:translateY(-0.6px);"></div>
<div class="a" style="left:474px;top:238px;width:407px;height:42px;border-radius:5px;background:linear-gradient(to bottom,#18996b,#167956);transform:translateY(-0.6px);"></div>
<svg class="a" style="left:472px;top:236px;overflow:visible" width="414" height="46" viewBox="0 0 414 46"><path d="M7.0 15.80 L9.0 15.80 L11.0 15.80 L13.0 15.80 L15.0 15.80 L17.0 15.80 L19.0 15.80 L21.0 15.82 L23.0 15.95 L25.0 16.20 L27.0 16.56 L29.0 17.01 L31.0 17.52 L33.0 18.07 L35.0 18.63 L37.0 19.16 L39.0 19.64 L41.0 20.02 L43.0 20.29 L45.0 20.40 L47.0 20.29 L49.0 20.02 L51.0 19.64 L53.0 19.16 L55.0 18.63 L57.0 18.07 L59.0 17.52 L61.0 17.01 L63.0 16.56 L65.0 16.20 L67.0 15.95 L69.0 15.82 L71.0 15.82 L73.0 15.95 L75.0 16.20 L77.0 16.56 L79.0 17.01 L81.0 17.52 L83.0 18.07 L85.0 18.63 L87.0 19.16 L89.0 19.64 L91.0 20.02 L93.0 20.29 L95.0 20.40 L97.0 20.29 L99.0 20.02 L101.0 19.64 L103.0 19.16 L105.0 18.63 L107.0 18.07 L109.0 17.52 L111.0 17.01 L113.0 16.56 L115.0 16.20 L117.0 15.95 L119.0 15.82 L121.0 15.82 L123.0 15.95 L125.0 16.20 L127.0 16.56 L129.0 17.01 L131.0 17.52 L133.0 18.07 L135.0 18.63 L137.0 19.16 L139.0 19.64 L141.0 20.02 L143.0 20.29 L145.0 20.40 L147.0 20.29 L149.0 20.02 L151.0 19.64 L153.0 19.16 L155.0 18.63 L157.0 18.07 L159.0 17.52 L161.0 17.01 L163.0 16.56 L165.0 16.20 L167.0 15.95 L169.0 15.82 L171.0 15.82 L173.0 15.95 L175.0 16.20 L177.0 16.56 L179.0 17.01 L181.0 17.52 L183.0 18.07 L185.0 18.63 L187.0 19.16 L189.0 19.64 L191.0 20.02 L193.0 20.29 L195.0 20.40 L197.0 20.29 L199.0 20.02 L201.0 19.64 L203.0 19.16 L205.0 18.63 L207.0 18.07 L209.0 17.52 L211.0 17.01 L213.0 16.56 L215.0 16.20 L217.0 15.95 L219.0 15.82 L221.0 15.82 L223.0 15.95 L225.0 16.20 L227.0 16.56 L229.0 17.01 L231.0 17.52 L233.0 18.07 L235.0 18.63 L237.0 19.16 L239.0 19.64 L241.0 20.02 L243.0 20.29 L245.0 20.40 L247.0 20.29 L249.0 20.02 L251.0 19.64 L253.0 19.16 L255.0 18.63 L257.0 18.07 L259.0 17.52 L261.0 17.01 L263.0 16.56 L265.0 16.20 L267.0 15.95 L269.0 15.82 L271.0 15.82 L273.0 15.95 L275.0 16.20 L277.0 16.56 L279.0 17.01 L281.0 17.52 L283.0 18.07 L285.0 18.63 L287.0 19.16 L289.0 19.64 L291.0 20.02 L293.0 20.29 L295.0 20.40 L297.0 20.29 L299.0 20.02 L301.0 19.64 L303.0 19.16 L305.0 18.63 L307.0 18.07 L309.0 17.52 L311.0 17.01 L313.0 16.56 L315.0 16.20 L317.0 15.95 L319.0 15.82 L321.0 15.82 L323.0 15.95 L325.0 16.20 L327.0 16.56 L329.0 17.01 L331.0 17.52 L333.0 18.07 L335.0 18.63 L337.0 19.16 L339.0 19.64 L341.0 20.02 L343.0 20.29 L345.0 20.40 L347.0 20.29 L349.0 20.02 L351.0 19.64 L353.0 19.16 L355.0 18.63 L357.0 18.07 L359.0 17.52 L361.0 17.01 L363.0 16.56 L365.0 16.20 L367.0 15.95 L369.0 15.82 L371.0 15.82 L373.0 15.95 L375.0 16.20 L377.0 16.56 L379.0 17.01 L381.0 17.52 L383.0 18.07 L385.0 18.63 L387.0 19.16 L389.0 19.64 L391.0 20.02 L393.0 20.29 L395.0 20.40 L397.0 20.29 L399.0 20.02 L401.0 19.64 L403.0 19.16 L405.0 18.63 L407.0 18.07 L409.0 17.52 L411.0 17.01 L411.0 28.19 L409.0 27.68 L407.0 27.13 L405.0 26.57 L403.0 26.04 L401.0 25.56 L399.0 25.18 L397.0 24.91 L395.0 24.80 L393.0 24.91 L391.0 25.18 L389.0 25.56 L387.0 26.04 L385.0 26.57 L383.0 27.13 L381.0 27.68 L379.0 28.19 L377.0 28.64 L375.0 29.00 L373.0 29.25 L371.0 29.38 L369.0 29.38 L367.0 29.25 L365.0 29.00 L363.0 28.64 L361.0 28.19 L359.0 27.68 L357.0 27.13 L355.0 26.57 L353.0 26.04 L351.0 25.56 L349.0 25.18 L347.0 24.91 L345.0 24.80 L343.0 24.91 L341.0 25.18 L339.0 25.56 L337.0 26.04 L335.0 26.57 L333.0 27.13 L331.0 27.68 L329.0 28.19 L327.0 28.64 L325.0 29.00 L323.0 29.25 L321.0 29.38 L319.0 29.38 L317.0 29.25 L315.0 29.00 L313.0 28.64 L311.0 28.19 L309.0 27.68 L307.0 27.13 L305.0 26.57 L303.0 26.04 L301.0 25.56 L299.0 25.18 L297.0 24.91 L295.0 24.80 L293.0 24.91 L291.0 25.18 L289.0 25.56 L287.0 26.04 L285.0 26.57 L283.0 27.13 L281.0 27.68 L279.0 28.19 L277.0 28.64 L275.0 29.00 L273.0 29.25 L271.0 29.38 L269.0 29.38 L267.0 29.25 L265.0 29.00 L263.0 28.64 L261.0 28.19 L259.0 27.68 L257.0 27.13 L255.0 26.57 L253.0 26.04 L251.0 25.56 L249.0 25.18 L247.0 24.91 L245.0 24.80 L243.0 24.91 L241.0 25.18 L239.0 25.56 L237.0 26.04 L235.0 26.57 L233.0 27.13 L231.0 27.68 L229.0 28.19 L227.0 28.64 L225.0 29.00 L223.0 29.25 L221.0 29.38 L219.0 29.38 L217.0 29.25 L215.0 29.00 L213.0 28.64 L211.0 28.19 L209.0 27.68 L207.0 27.13 L205.0 26.57 L203.0 26.04 L201.0 25.56 L199.0 25.18 L197.0 24.91 L195.0 24.80 L193.0 24.91 L191.0 25.18 L189.0 25.56 L187.0 26.04 L185.0 26.57 L183.0 27.13 L181.0 27.68 L179.0 28.19 L177.0 28.64 L175.0 29.00 L173.0 29.25 L171.0 29.38 L169.0 29.38 L167.0 29.25 L165.0 29.00 L163.0 28.64 L161.0 28.19 L159.0 27.68 L157.0 27.13 L155.0 26.57 L153.0 26.04 L151.0 25.56 L149.0 25.18 L147.0 24.91 L145.0 24.80 L143.0 24.91 L141.0 25.18 L139.0 25.56 L137.0 26.04 L135.0 26.57 L133.0 27.13 L131.0 27.68 L129.0 28.19 L127.0 28.64 L125.0 29.00 L123.0 29.25 L121.0 29.38 L119.0 29.38 L117.0 29.25 L115.0 29.00 L113.0 28.64 L111.0 28.19 L109.0 27.68 L107.0 27.13 L105.0 26.57 L103.0 26.04 L101.0 25.56 L99.0 25.18 L97.0 24.91 L95.0 24.80 L93.0 24.91 L91.0 25.18 L89.0 25.56 L87.0 26.04 L85.0 26.57 L83.0 27.13 L81.0 27.68 L79.0 28.19 L77.0 28.64 L75.0 29.00 L73.0 29.25 L71.0 29.38 L69.0 29.38 L67.0 29.25 L65.0 29.00 L63.0 28.64 L61.0 28.19 L59.0 27.68 L57.0 27.13 L55.0 26.57 L53.0 26.04 L51.0 25.56 L49.0 25.18 L47.0 24.91 L45.0 24.80 L43.0 24.91 L41.0 25.18 L39.0 25.56 L37.0 26.04 L35.0 26.57 L33.0 27.13 L31.0 27.68 L29.0 28.19 L27.0 28.64 L25.0 29.00 L23.0 29.25 L21.0 29.38 L19.0 29.40 L17.0 29.40 L15.0 29.40 L13.0 29.40 L11.0 29.40 L9.0 29.40 L7.0 29.40Z" fill="url(#st)"/></svg>
<div class="a" style="left:503px;top:238px;width:1px;height:42px;background:rgba(255,255,255,0.09);"></div>
<div class="a" style="left:599px;top:238px;width:1px;height:42px;background:rgba(255,255,255,0.09);"></div>
<div class="a" style="left:695px;top:238px;width:1px;height:42px;background:rgba(255,255,255,0.09);"></div>
<div class="a" style="left:791px;top:238px;width:1px;height:42px;background:rgba(255,255,255,0.09);"></div>
<div class="a" style="left:166px;top:290px;width:144px;height:64px;background:#232326;"></div>
<div class="a" style="left:166px;top:290px;width:3px;height:64px;background:#3b82f6;transform:translateX(0.45px);"></div>
<div class="a" style="left:170px;top:290px;width:140px;height:1px;background:#29292d;"></div>
<div class="a" style="left:312px;top:290px;width:768px;height:1px;background:#1b1b1e;"></div>
<div class="a" style="left:256px;top:323.3px;width:19.7px;height:14.2px;background:#3f3f46;border-radius:3px;"></div>
<div class="a" style="left:279.4px;top:323.3px;width:17.8px;height:14.2px;background:#3f3f46;border-radius:3px;"></div>
<div class="a" style="left:179.4px;top:344.6px;width:87.6px;height:3px;background:#3a3a42;border-radius:2px;"></div>
<div class="a" style="left:230.3px;top:340.40000000000003px;width:11.4px;height:11.4px;background:#1d4b7c;border-radius:6px;"></div>
<div class="a" style="left:309px;top:300px;width:676px;height:46px;border-radius:7px;background:#4087f6;box-shadow:0 0.5px 2px 0.5px rgba(6,8,30,0.75);transform:translateY(-0.6px);"></div>
<div class="a" style="left:311px;top:302px;width:672px;height:42px;border-radius:5px;background:linear-gradient(to bottom,#3770d2,#2f5ba6);transform:translateY(-0.6px);"></div>
<svg class="a" style="left:309px;top:300px;overflow:visible" width="679" height="46" viewBox="0 0 679 46"><path d="M7.0 15.80 L9.0 15.80 L11.0 15.80 L13.0 15.80 L15.0 15.80 L17.0 15.80 L19.0 15.80 L21.0 15.82 L23.0 15.95 L25.0 16.20 L27.0 16.56 L29.0 17.01 L31.0 17.52 L33.0 18.07 L35.0 18.63 L37.0 19.16 L39.0 19.64 L41.0 20.02 L43.0 20.29 L45.0 20.40 L47.0 20.29 L49.0 20.02 L51.0 19.64 L53.0 19.16 L55.0 18.63 L57.0 18.07 L59.0 17.52 L61.0 17.01 L63.0 16.56 L65.0 16.20 L67.0 15.95 L69.0 15.82 L71.0 15.82 L73.0 15.95 L75.0 16.20 L77.0 16.56 L79.0 17.01 L81.0 17.52 L83.0 18.07 L85.0 18.63 L87.0 19.16 L89.0 19.64 L91.0 20.02 L93.0 20.29 L95.0 20.40 L97.0 20.29 L99.0 20.02 L101.0 19.64 L103.0 19.16 L105.0 18.63 L107.0 18.07 L109.0 17.52 L111.0 17.01 L113.0 16.56 L115.0 16.20 L117.0 15.95 L119.0 15.82 L121.0 15.82 L123.0 15.95 L125.0 16.20 L127.0 16.56 L129.0 17.01 L131.0 17.52 L133.0 18.07 L135.0 18.63 L137.0 19.16 L139.0 19.64 L141.0 20.02 L143.0 20.29 L145.0 20.40 L147.0 20.29 L149.0 20.02 L151.0 19.64 L153.0 19.16 L155.0 18.63 L157.0 18.07 L159.0 17.52 L161.0 17.01 L163.0 16.56 L165.0 16.20 L167.0 15.95 L169.0 15.82 L171.0 15.82 L173.0 15.95 L175.0 16.20 L177.0 16.56 L179.0 17.01 L181.0 17.52 L183.0 18.07 L185.0 18.63 L187.0 19.16 L189.0 19.64 L191.0 20.02 L193.0 20.29 L195.0 20.40 L197.0 20.29 L199.0 20.02 L201.0 19.64 L203.0 19.16 L205.0 18.63 L207.0 18.07 L209.0 17.52 L211.0 17.01 L213.0 16.56 L215.0 16.20 L217.0 15.95 L219.0 15.82 L221.0 15.82 L223.0 15.95 L225.0 16.20 L227.0 16.56 L229.0 17.01 L231.0 17.52 L233.0 18.07 L235.0 18.63 L237.0 19.16 L239.0 19.64 L241.0 20.02 L243.0 20.29 L245.0 20.40 L247.0 20.29 L249.0 20.02 L251.0 19.64 L253.0 19.16 L255.0 18.63 L257.0 18.07 L259.0 17.52 L261.0 17.01 L263.0 16.56 L265.0 16.20 L267.0 15.95 L269.0 15.82 L271.0 15.82 L273.0 15.95 L275.0 16.20 L277.0 16.56 L279.0 17.01 L281.0 17.52 L283.0 18.07 L285.0 18.63 L287.0 19.16 L289.0 19.64 L291.0 20.02 L293.0 20.29 L295.0 20.40 L297.0 20.29 L299.0 20.02 L301.0 19.64 L303.0 19.16 L305.0 18.63 L307.0 18.07 L309.0 17.52 L311.0 17.01 L313.0 16.56 L315.0 16.20 L317.0 15.95 L319.0 15.82 L321.0 15.82 L323.0 15.95 L325.0 16.20 L327.0 16.56 L329.0 17.01 L331.0 17.52 L333.0 18.07 L335.0 18.63 L337.0 19.16 L339.0 19.64 L341.0 20.02 L343.0 20.29 L345.0 20.40 L347.0 20.29 L349.0 20.02 L351.0 19.64 L353.0 19.16 L355.0 18.63 L357.0 18.07 L359.0 17.52 L361.0 17.01 L363.0 16.56 L365.0 16.20 L367.0 15.95 L369.0 15.82 L371.0 15.82 L373.0 15.95 L375.0 16.20 L377.0 16.56 L379.0 17.01 L381.0 17.52 L383.0 18.07 L385.0 18.63 L387.0 19.16 L389.0 19.64 L391.0 20.02 L393.0 20.29 L395.0 20.40 L397.0 20.29 L399.0 20.02 L401.0 19.64 L403.0 19.16 L405.0 18.63 L407.0 18.07 L409.0 17.52 L411.0 17.01 L413.0 16.56 L415.0 16.20 L417.0 15.95 L419.0 15.82 L421.0 15.82 L423.0 15.95 L425.0 16.20 L427.0 16.56 L429.0 17.01 L431.0 17.52 L433.0 18.07 L435.0 18.63 L437.0 19.16 L439.0 19.64 L441.0 20.02 L443.0 20.29 L445.0 20.40 L447.0 20.29 L449.0 20.02 L451.0 19.64 L453.0 19.16 L455.0 18.63 L457.0 18.07 L459.0 17.52 L461.0 17.01 L463.0 16.56 L465.0 16.20 L467.0 15.95 L469.0 15.82 L471.0 15.82 L473.0 15.95 L475.0 16.20 L477.0 16.56 L479.0 17.01 L481.0 17.52 L483.0 18.07 L485.0 18.63 L487.0 19.16 L489.0 19.64 L491.0 20.02 L493.0 20.29 L495.0 20.40 L497.0 20.29 L499.0 20.02 L501.0 19.64 L503.0 19.16 L505.0 18.63 L507.0 18.07 L509.0 17.52 L511.0 17.01 L513.0 16.56 L515.0 16.20 L517.0 15.95 L519.0 15.82 L521.0 15.82 L523.0 15.95 L525.0 16.20 L527.0 16.56 L529.0 17.01 L531.0 17.52 L533.0 18.07 L535.0 18.63 L537.0 19.16 L539.0 19.64 L541.0 20.02 L543.0 20.29 L545.0 20.40 L547.0 20.29 L549.0 20.02 L551.0 19.64 L553.0 19.16 L555.0 18.63 L557.0 18.07 L559.0 17.52 L561.0 17.01 L563.0 16.56 L565.0 16.20 L567.0 15.95 L569.0 15.82 L571.0 15.82 L573.0 15.95 L575.0 16.20 L577.0 16.56 L579.0 17.01 L581.0 17.52 L583.0 18.07 L585.0 18.63 L587.0 19.16 L589.0 19.64 L591.0 20.02 L593.0 20.29 L595.0 20.40 L597.0 20.29 L599.0 20.02 L601.0 19.64 L603.0 19.16 L605.0 18.63 L607.0 18.07 L609.0 17.52 L611.0 17.01 L613.0 16.56 L615.0 16.20 L617.0 15.95 L619.0 15.82 L621.0 15.82 L623.0 15.95 L625.0 16.20 L627.0 16.56 L629.0 17.01 L631.0 17.52 L633.0 18.07 L635.0 18.63 L637.0 19.16 L639.0 19.64 L641.0 20.02 L643.0 20.29 L645.0 20.40 L647.0 20.29 L649.0 20.02 L651.0 19.64 L653.0 19.16 L655.0 18.63 L657.0 18.07 L659.0 17.52 L661.0 17.01 L663.0 16.56 L665.0 16.20 L667.0 15.95 L669.0 15.82 L671.0 15.82 L673.0 15.95 L675.0 16.20 L677.0 16.56 L677.0 28.64 L675.0 29.00 L673.0 29.25 L671.0 29.38 L669.0 29.38 L667.0 29.25 L665.0 29.00 L663.0 28.64 L661.0 28.19 L659.0 27.68 L657.0 27.13 L655.0 26.57 L653.0 26.04 L651.0 25.56 L649.0 25.18 L647.0 24.91 L645.0 24.80 L643.0 24.91 L641.0 25.18 L639.0 25.56 L637.0 26.04 L635.0 26.57 L633.0 27.13 L631.0 27.68 L629.0 28.19 L627.0 28.64 L625.0 29.00 L623.0 29.25 L621.0 29.38 L619.0 29.38 L617.0 29.25 L615.0 29.00 L613.0 28.64 L611.0 28.19 L609.0 27.68 L607.0 27.13 L605.0 26.57 L603.0 26.04 L601.0 25.56 L599.0 25.18 L597.0 24.91 L595.0 24.80 L593.0 24.91 L591.0 25.18 L589.0 25.56 L587.0 26.04 L585.0 26.57 L583.0 27.13 L581.0 27.68 L579.0 28.19 L577.0 28.64 L575.0 29.00 L573.0 29.25 L571.0 29.38 L569.0 29.38 L567.0 29.25 L565.0 29.00 L563.0 28.64 L561.0 28.19 L559.0 27.68 L557.0 27.13 L555.0 26.57 L553.0 26.04 L551.0 25.56 L549.0 25.18 L547.0 24.91 L545.0 24.80 L543.0 24.91 L541.0 25.18 L539.0 25.56 L537.0 26.04 L535.0 26.57 L533.0 27.13 L531.0 27.68 L529.0 28.19 L527.0 28.64 L525.0 29.00 L523.0 29.25 L521.0 29.38 L519.0 29.38 L517.0 29.25 L515.0 29.00 L513.0 28.64 L511.0 28.19 L509.0 27.68 L507.0 27.13 L505.0 26.57 L503.0 26.04 L501.0 25.56 L499.0 25.18 L497.0 24.91 L495.0 24.80 L493.0 24.91 L491.0 25.18 L489.0 25.56 L487.0 26.04 L485.0 26.57 L483.0 27.13 L481.0 27.68 L479.0 28.19 L477.0 28.64 L475.0 29.00 L473.0 29.25 L471.0 29.38 L469.0 29.38 L467.0 29.25 L465.0 29.00 L463.0 28.64 L461.0 28.19 L459.0 27.68 L457.0 27.13 L455.0 26.57 L453.0 26.04 L451.0 25.56 L449.0 25.18 L447.0 24.91 L445.0 24.80 L443.0 24.91 L441.0 25.18 L439.0 25.56 L437.0 26.04 L435.0 26.57 L433.0 27.13 L431.0 27.68 L429.0 28.19 L427.0 28.64 L425.0 29.00 L423.0 29.25 L421.0 29.38 L419.0 29.38 L417.0 29.25 L415.0 29.00 L413.0 28.64 L411.0 28.19 L409.0 27.68 L407.0 27.13 L405.0 26.57 L403.0 26.04 L401.0 25.56 L399.0 25.18 L397.0 24.91 L395.0 24.80 L393.0 24.91 L391.0 25.18 L389.0 25.56 L387.0 26.04 L385.0 26.57 L383.0 27.13 L381.0 27.68 L379.0 28.19 L377.0 28.64 L375.0 29.00 L373.0 29.25 L371.0 29.38 L369.0 29.38 L367.0 29.25 L365.0 29.00 L363.0 28.64 L361.0 28.19 L359.0 27.68 L357.0 27.13 L355.0 26.57 L353.0 26.04 L351.0 25.56 L349.0 25.18 L347.0 24.91 L345.0 24.80 L343.0 24.91 L341.0 25.18 L339.0 25.56 L337.0 26.04 L335.0 26.57 L333.0 27.13 L331.0 27.68 L329.0 28.19 L327.0 28.64 L325.0 29.00 L323.0 29.25 L321.0 29.38 L319.0 29.38 L317.0 29.25 L315.0 29.00 L313.0 28.64 L311.0 28.19 L309.0 27.68 L307.0 27.13 L305.0 26.57 L303.0 26.04 L301.0 25.56 L299.0 25.18 L297.0 24.91 L295.0 24.80 L293.0 24.91 L291.0 25.18 L289.0 25.56 L287.0 26.04 L285.0 26.57 L283.0 27.13 L281.0 27.68 L279.0 28.19 L277.0 28.64 L275.0 29.00 L273.0 29.25 L271.0 29.38 L269.0 29.38 L267.0 29.25 L265.0 29.00 L263.0 28.64 L261.0 28.19 L259.0 27.68 L257.0 27.13 L255.0 26.57 L253.0 26.04 L251.0 25.56 L249.0 25.18 L247.0 24.91 L245.0 24.80 L243.0 24.91 L241.0 25.18 L239.0 25.56 L237.0 26.04 L235.0 26.57 L233.0 27.13 L231.0 27.68 L229.0 28.19 L227.0 28.64 L225.0 29.00 L223.0 29.25 L221.0 29.38 L219.0 29.38 L217.0 29.25 L215.0 29.00 L213.0 28.64 L211.0 28.19 L209.0 27.68 L207.0 27.13 L205.0 26.57 L203.0 26.04 L201.0 25.56 L199.0 25.18 L197.0 24.91 L195.0 24.80 L193.0 24.91 L191.0 25.18 L189.0 25.56 L187.0 26.04 L185.0 26.57 L183.0 27.13 L181.0 27.68 L179.0 28.19 L177.0 28.64 L175.0 29.00 L173.0 29.25 L171.0 29.38 L169.0 29.38 L167.0 29.25 L165.0 29.00 L163.0 28.64 L161.0 28.19 L159.0 27.68 L157.0 27.13 L155.0 26.57 L153.0 26.04 L151.0 25.56 L149.0 25.18 L147.0 24.91 L145.0 24.80 L143.0 24.91 L141.0 25.18 L139.0 25.56 L137.0 26.04 L135.0 26.57 L133.0 27.13 L131.0 27.68 L129.0 28.19 L127.0 28.64 L125.0 29.00 L123.0 29.25 L121.0 29.38 L119.0 29.38 L117.0 29.25 L115.0 29.00 L113.0 28.64 L111.0 28.19 L109.0 27.68 L107.0 27.13 L105.0 26.57 L103.0 26.04 L101.0 25.56 L99.0 25.18 L97.0 24.91 L95.0 24.80 L93.0 24.91 L91.0 25.18 L89.0 25.56 L87.0 26.04 L85.0 26.57 L83.0 27.13 L81.0 27.68 L79.0 28.19 L77.0 28.64 L75.0 29.00 L73.0 29.25 L71.0 29.38 L69.0 29.38 L67.0 29.25 L65.0 29.00 L63.0 28.64 L61.0 28.19 L59.0 27.68 L57.0 27.13 L55.0 26.57 L53.0 26.04 L51.0 25.56 L49.0 25.18 L47.0 24.91 L45.0 24.80 L43.0 24.91 L41.0 25.18 L39.0 25.56 L37.0 26.04 L35.0 26.57 L33.0 27.13 L31.0 27.68 L29.0 28.19 L27.0 28.64 L25.0 29.00 L23.0 29.25 L21.0 29.38 L19.0 29.40 L17.0 29.40 L15.0 29.40 L13.0 29.40 L11.0 29.40 L9.0 29.40 L7.0 29.40Z" fill="url(#st)"/></svg>
<div class="a" style="left:407px;top:302px;width:1px;height:42px;background:rgba(255,255,255,0.09);"></div>
<div class="a" style="left:503px;top:302px;width:1px;height:42px;background:rgba(255,255,255,0.09);"></div>
<div class="a" style="left:599px;top:302px;width:1px;height:42px;background:rgba(255,255,255,0.09);"></div>
<div class="a" style="left:695px;top:302px;width:1px;height:42px;background:rgba(255,255,255,0.09);"></div>
<div class="a" style="left:791px;top:302px;width:1px;height:42px;background:rgba(255,255,255,0.09);"></div>
<div class="a" style="left:887px;top:302px;width:1px;height:42px;background:rgba(255,255,255,0.09);"></div>
<div class="a" style="left:166px;top:354px;width:144px;height:64px;background:#232326;"></div>
<div class="a" style="left:166px;top:354px;width:3px;height:64px;background:#8b5cf6;transform:translateX(0.45px);"></div>
<div class="a" style="left:170px;top:354px;width:140px;height:1px;background:#29292d;"></div>
<div class="a" style="left:312px;top:354px;width:768px;height:1px;background:#1b1b1e;"></div>
<div class="a" style="left:256px;top:387.3px;width:19.7px;height:14.2px;background:#3f3f46;border-radius:3px;"></div>
<div class="a" style="left:279.4px;top:387.3px;width:17.8px;height:14.2px;background:#3f3f46;border-radius:3px;"></div>
<div class="a" style="left:179.4px;top:408.6px;width:87.6px;height:3px;background:#3a3a42;border-radius:2px;"></div>
<div class="a" style="left:230.3px;top:404.40000000000003px;width:11.4px;height:11.4px;background:#1d4b7c;border-radius:6px;"></div>
<div class="a" style="left:309px;top:364px;width:387px;height:46px;border-radius:7px;background:#9162f8;box-shadow:0 0.5px 2px 0.5px rgba(6,8,30,0.75);transform:translateY(-0.6px);"></div>
<div class="a" style="left:311px;top:366px;width:383px;height:42px;border-radius:5px;background:linear-gradient(to bottom,#7d53ca,#6343a3);transform:translateY(-0.6px);"></div>
<svg class="a" style="left:309px;top:364px;overflow:visible" width="390" height="46" viewBox="0 0 390 46"><path d="M7.0 15.80 L9.0 15.80 L11.0 15.80 L13.0 15.80 L15.0 15.80 L17.0 15.80 L19.0 15.80 L21.0 15.82 L23.0 15.95 L25.0 16.20 L27.0 16.56 L29.0 17.01 L31.0 17.52 L33.0 18.07 L35.0 18.63 L37.0 19.16 L39.0 19.64 L41.0 20.02 L43.0 20.29 L45.0 20.40 L47.0 20.29 L49.0 20.02 L51.0 19.64 L53.0 19.16 L55.0 18.63 L57.0 18.07 L59.0 17.52 L61.0 17.01 L63.0 16.56 L65.0 16.20 L67.0 15.95 L69.0 15.82 L71.0 15.82 L73.0 15.95 L75.0 16.20 L77.0 16.56 L79.0 17.01 L81.0 17.52 L83.0 18.07 L85.0 18.63 L87.0 19.16 L89.0 19.64 L91.0 20.02 L93.0 20.29 L95.0 20.40 L97.0 20.29 L99.0 20.02 L101.0 19.64 L103.0 19.16 L105.0 18.63 L107.0 18.07 L109.0 17.52 L111.0 17.01 L113.0 16.56 L115.0 16.20 L117.0 15.95 L119.0 15.82 L121.0 15.82 L123.0 15.95 L125.0 16.20 L127.0 16.56 L129.0 17.01 L131.0 17.52 L133.0 18.07 L135.0 18.63 L137.0 19.16 L139.0 19.64 L141.0 20.02 L143.0 20.29 L145.0 20.40 L147.0 20.29 L149.0 20.02 L151.0 19.64 L153.0 19.16 L155.0 18.63 L157.0 18.07 L159.0 17.52 L161.0 17.01 L163.0 16.56 L165.0 16.20 L167.0 15.95 L169.0 15.82 L171.0 15.82 L173.0 15.95 L175.0 16.20 L177.0 16.56 L179.0 17.01 L181.0 17.52 L183.0 18.07 L185.0 18.63 L187.0 19.16 L189.0 19.64 L191.0 20.02 L193.0 20.29 L195.0 20.40 L197.0 20.29 L199.0 20.02 L201.0 19.64 L203.0 19.16 L205.0 18.63 L207.0 18.07 L209.0 17.52 L211.0 17.01 L213.0 16.56 L215.0 16.20 L217.0 15.95 L219.0 15.82 L221.0 15.82 L223.0 15.95 L225.0 16.20 L227.0 16.56 L229.0 17.01 L231.0 17.52 L233.0 18.07 L235.0 18.63 L237.0 19.16 L239.0 19.64 L241.0 20.02 L243.0 20.29 L245.0 20.40 L247.0 20.29 L249.0 20.02 L251.0 19.64 L253.0 19.16 L255.0 18.63 L257.0 18.07 L259.0 17.52 L261.0 17.01 L263.0 16.56 L265.0 16.20 L267.0 15.95 L269.0 15.82 L271.0 15.82 L273.0 15.95 L275.0 16.20 L277.0 16.56 L279.0 17.01 L281.0 17.52 L283.0 18.07 L285.0 18.63 L287.0 19.16 L289.0 19.64 L291.0 20.02 L293.0 20.29 L295.0 20.40 L297.0 20.29 L299.0 20.02 L301.0 19.64 L303.0 19.16 L305.0 18.63 L307.0 18.07 L309.0 17.52 L311.0 17.01 L313.0 16.56 L315.0 16.20 L317.0 15.95 L319.0 15.82 L321.0 15.82 L323.0 15.95 L325.0 16.20 L327.0 16.56 L329.0 17.01 L331.0 17.52 L333.0 18.07 L335.0 18.63 L337.0 19.16 L339.0 19.64 L341.0 20.02 L343.0 20.29 L345.0 20.40 L347.0 20.29 L349.0 20.02 L351.0 19.64 L353.0 19.16 L355.0 18.63 L357.0 18.07 L359.0 17.52 L361.0 17.01 L363.0 16.56 L365.0 16.20 L367.0 15.95 L369.0 15.82 L371.0 15.82 L373.0 15.95 L375.0 16.20 L377.0 16.56 L379.0 17.01 L381.0 17.52 L383.0 18.07 L385.0 18.63 L387.0 19.16 L387.0 26.04 L385.0 26.57 L383.0 27.13 L381.0 27.68 L379.0 28.19 L377.0 28.64 L375.0 29.00 L373.0 29.25 L371.0 29.38 L369.0 29.38 L367.0 29.25 L365.0 29.00 L363.0 28.64 L361.0 28.19 L359.0 27.68 L357.0 27.13 L355.0 26.57 L353.0 26.04 L351.0 25.56 L349.0 25.18 L347.0 24.91 L345.0 24.80 L343.0 24.91 L341.0 25.18 L339.0 25.56 L337.0 26.04 L335.0 26.57 L333.0 27.13 L331.0 27.68 L329.0 28.19 L327.0 28.64 L325.0 29.00 L323.0 29.25 L321.0 29.38 L319.0 29.38 L317.0 29.25 L315.0 29.00 L313.0 28.64 L311.0 28.19 L309.0 27.68 L307.0 27.13 L305.0 26.57 L303.0 26.04 L301.0 25.56 L299.0 25.18 L297.0 24.91 L295.0 24.80 L293.0 24.91 L291.0 25.18 L289.0 25.56 L287.0 26.04 L285.0 26.57 L283.0 27.13 L281.0 27.68 L279.0 28.19 L277.0 28.64 L275.0 29.00 L273.0 29.25 L271.0 29.38 L269.0 29.38 L267.0 29.25 L265.0 29.00 L263.0 28.64 L261.0 28.19 L259.0 27.68 L257.0 27.13 L255.0 26.57 L253.0 26.04 L251.0 25.56 L249.0 25.18 L247.0 24.91 L245.0 24.80 L243.0 24.91 L241.0 25.18 L239.0 25.56 L237.0 26.04 L235.0 26.57 L233.0 27.13 L231.0 27.68 L229.0 28.19 L227.0 28.64 L225.0 29.00 L223.0 29.25 L221.0 29.38 L219.0 29.38 L217.0 29.25 L215.0 29.00 L213.0 28.64 L211.0 28.19 L209.0 27.68 L207.0 27.13 L205.0 26.57 L203.0 26.04 L201.0 25.56 L199.0 25.18 L197.0 24.91 L195.0 24.80 L193.0 24.91 L191.0 25.18 L189.0 25.56 L187.0 26.04 L185.0 26.57 L183.0 27.13 L181.0 27.68 L179.0 28.19 L177.0 28.64 L175.0 29.00 L173.0 29.25 L171.0 29.38 L169.0 29.38 L167.0 29.25 L165.0 29.00 L163.0 28.64 L161.0 28.19 L159.0 27.68 L157.0 27.13 L155.0 26.57 L153.0 26.04 L151.0 25.56 L149.0 25.18 L147.0 24.91 L145.0 24.80 L143.0 24.91 L141.0 25.18 L139.0 25.56 L137.0 26.04 L135.0 26.57 L133.0 27.13 L131.0 27.68 L129.0 28.19 L127.0 28.64 L125.0 29.00 L123.0 29.25 L121.0 29.38 L119.0 29.38 L117.0 29.25 L115.0 29.00 L113.0 28.64 L111.0 28.19 L109.0 27.68 L107.0 27.13 L105.0 26.57 L103.0 26.04 L101.0 25.56 L99.0 25.18 L97.0 24.91 L95.0 24.80 L93.0 24.91 L91.0 25.18 L89.0 25.56 L87.0 26.04 L85.0 26.57 L83.0 27.13 L81.0 27.68 L79.0 28.19 L77.0 28.64 L75.0 29.00 L73.0 29.25 L71.0 29.38 L69.0 29.38 L67.0 29.25 L65.0 29.00 L63.0 28.64 L61.0 28.19 L59.0 27.68 L57.0 27.13 L55.0 26.57 L53.0 26.04 L51.0 25.56 L49.0 25.18 L47.0 24.91 L45.0 24.80 L43.0 24.91 L41.0 25.18 L39.0 25.56 L37.0 26.04 L35.0 26.57 L33.0 27.13 L31.0 27.68 L29.0 28.19 L27.0 28.64 L25.0 29.00 L23.0 29.25 L21.0 29.38 L19.0 29.40 L17.0 29.40 L15.0 29.40 L13.0 29.40 L11.0 29.40 L9.0 29.40 L7.0 29.40Z" fill="url(#st)"/></svg>
<div class="a" style="left:407px;top:366px;width:1px;height:42px;background:rgba(255,255,255,0.09);"></div>
<div class="a" style="left:503px;top:366px;width:1px;height:42px;background:rgba(255,255,255,0.09);"></div>
<div class="a" style="left:599px;top:366px;width:1px;height:42px;background:rgba(255,255,255,0.09);"></div>
<div class="a" style="left:690.8px;top:370.5px;width:2.2px;height:35px;background:rgba(255,255,255,0.6);border-radius:1px;"></div>
<span class="t" id="t0" style="top:10.24px;font-size:12px;color:#f0f0f2;font-weight:400;letter-spacing:-0.340px;left:4.2px;-webkit-text-stroke:0.25px #f0f0f2;">MelodyKit</span>
<span class="t" id="t1" style="top:10.24px;font-size:12px;color:#71717a;font-weight:400;letter-spacing:0.000px;left:55.2px;">·</span>
<span class="t" id="t2" style="top:10.24px;font-size:12px;color:#8e8e98;font-weight:400;letter-spacing:-0.305px;left:60.3px;">Untitled</span>
<span class="t" id="t3" style="top:11.50px;font-size:9.8px;color:#a1a1aa;font-weight:400;letter-spacing:-0.510px;left:1043.2px;">120 BPM</span>
<span class="t" id="t4" style="top:49.30px;font-size:15px;color:#f4f4f5;font-weight:400;letter-spacing:0.000px;right:1139.2px;-webkit-text-stroke:0.45px #f4f4f5;">Tracks</span>
<span class="t" id="t5" style="top:76.84px;font-size:12px;color:#f4f4f5;font-weight:400;letter-spacing:-0.669px;left:63.3px;transform:translateX(-50%);margin-left:-0.335px;">Add Track</span>
<span class="t" id="t6" style="top:105.84px;font-size:12px;color:#f4f4f5;font-weight:400;letter-spacing:-0.503px;left:63.3px;transform:translateX(-50%);margin-left:-0.252px;">Add Beat</span>
<span class="t" id="t7" style="top:134.84px;font-size:12px;color:#f4f4f5;font-weight:400;letter-spacing:-0.512px;left:63.3px;transform:translateX(-50%);margin-left:-0.256px;">Add Sampler</span>
<span class="t" id="t8" style="top:186.34px;font-size:12px;color:#e4e4e7;font-weight:400;letter-spacing:-1.079px;left:0px;">Track 1</span>
<span class="t" id="t9" style="top:201.53px;font-size:10px;color:#71717a;font-weight:400;letter-spacing:-0.340px;left:0px;">2 notes</span>
<span class="t" id="t10" style="top:234.34px;font-size:12px;color:#e4e4e7;font-weight:400;letter-spacing:-1.079px;left:0px;">Track 2</span>
<span class="t" id="t11" style="top:249.53px;font-size:10px;color:#71717a;font-weight:400;letter-spacing:-0.340px;left:0px;">2 notes</span>
<span class="t" id="t12" style="top:282.34px;font-size:12px;color:#e4e4e7;font-weight:400;letter-spacing:-1.079px;left:0px;">Track 3</span>
<span class="t" id="t13" style="top:297.54px;font-size:10px;color:#71717a;font-weight:400;letter-spacing:-0.340px;left:0px;">2 notes</span>
<span class="t" id="t14" style="top:330.34px;font-size:12px;color:#e4e4e7;font-weight:400;letter-spacing:-1.079px;left:0px;">Track 4</span>
<span class="t" id="t15" style="top:345.54px;font-size:10px;color:#71717a;font-weight:400;letter-spacing:-0.340px;left:0px;">2 notes</span>
<span class="t" id="t16" style="top:378.34px;font-size:12px;color:#e4e4e7;font-weight:400;letter-spacing:-0.673px;left:0px;">Beat 5</span>
<span class="t" id="t17" style="top:393.54px;font-size:10px;color:#71717a;font-weight:400;letter-spacing:-0.340px;left:0px;">0 notes</span>
<span class="t" id="t18" style="top:659.13px;font-size:10px;color:#6c6c75;font-weight:400;letter-spacing:-0.175px;left:-28.5px;">Double-click to rename</span>
<span class="t" id="t19" style="top:672.33px;font-size:10px;color:#6c6c75;font-weight:400;letter-spacing:-0.133px;left:-29px;">Right-click notes to delete</span>
<span class="t" id="t20" style="top:46.50px;font-size:13px;color:#f4f4f5;font-weight:400;letter-spacing:-0.129px;left:260.7px;">Arrangement</span>
<span class="t" id="t21" style="top:47.04px;font-size:12px;color:#e4e4e7;font-weight:400;letter-spacing:-0.344px;left:378px;">Loop</span>
<span class="t" id="t22" style="top:47.74px;font-size:12px;color:#ffffff;font-weight:400;letter-spacing:-0.489px;left:840.3px;transform:translateX(-50%);margin-left:-0.244px;">Export</span>
<span class="t" id="t23" style="top:49.76px;font-size:9.5px;color:#7c7c86;font-weight:400;letter-spacing:-0.637px;left:875.4px;">BPM</span>
<span class="t" id="t24" style="top:48.17px;font-size:11.5px;color:#f4f4f5;font-weight:400;letter-spacing:-0.595px;left:909px;">120</span>
<span class="t" id="t25" style="top:49.06px;font-size:9.5px;color:#a1a1aa;font-weight:400;letter-spacing:-0.206px;left:1012.2px;transform:translateX(-50%);margin-left:-0.103px;">75%</span>
<span class="t" id="t26" style="top:47.54px;font-size:12px;color:#f4f4f5;font-weight:400;letter-spacing:-0.421px;left:1081.5px;">+ 16 bars</span>
<span class="t" id="t27" style="top:49.76px;font-size:9.5px;color:#71717a;font-weight:400;letter-spacing:0.000px;left:1147px;">Snap</span>
<span class="t" id="t28" style="top:81.46px;font-size:9.5px;color:#9c9ca6;font-weight:400;letter-spacing:0.000px;left:407.3px;transform:translateX(-50%);">2</span>
<span class="t" id="t29" style="top:81.46px;font-size:9.5px;color:#9c9ca6;font-weight:400;letter-spacing:0.000px;left:503.3px;transform:translateX(-50%);">3</span>
<span class="t" id="t30" style="top:81.46px;font-size:9.5px;color:#9c9ca6;font-weight:400;letter-spacing:0.000px;left:599.3px;transform:translateX(-50%);">4</span>
<span class="t" id="t31" style="top:81.46px;font-size:9.5px;color:#9c9ca6;font-weight:400;letter-spacing:0.000px;left:695.3px;transform:translateX(-50%);">5</span>
<span class="t" id="t32" style="top:81.46px;font-size:9.5px;color:#9c9ca6;font-weight:400;letter-spacing:0.000px;left:791.3px;transform:translateX(-50%);">6</span>
<span class="t" id="t33" style="top:81.46px;font-size:9.5px;color:#9c9ca6;font-weight:400;letter-spacing:0.000px;left:887.3px;transform:translateX(-50%);">7</span>
<span class="t" id="t34" style="top:81.46px;font-size:9.5px;color:#9c9ca6;font-weight:400;letter-spacing:0.000px;left:983.3px;transform:translateX(-50%);">8</span>
<span class="t" id="t35" style="top:107.04px;font-size:12px;color:#fafafa;font-weight:700;letter-spacing:-0.951px;left:179.4px;">Track 1</span>
<span class="t" id="t36" style="top:124.73px;font-size:10px;color:#8a8a94;font-weight:400;letter-spacing:-0.340px;left:179.4px;">2 notes</span>
<span class="t" id="t37" style="top:133.66px;font-size:9.5px;color:#d4d4d8;font-weight:400;letter-spacing:0.000px;left:265.9px;transform:translateX(-50%);">M</span>
<span class="t" id="t38" style="top:133.66px;font-size:9.5px;color:#d4d4d8;font-weight:400;letter-spacing:0.000px;left:288.3px;transform:translateX(-50%);">S</span>
<span class="t" id="t39" style="top:150.76px;font-size:9.5px;color:#c4c4cc;font-weight:400;letter-spacing:-0.432px;right:854.25px;margin-right:0.432px;">100%</span>
<span class="t" id="t40" style="top:115.13px;font-size:10px;color:#ffffff;font-weight:700;letter-spacing:-0.574px;left:316.5px;">Track 1</span>
<span class="t" id="t41" style="top:171.04px;font-size:12px;color:#fafafa;font-weight:700;letter-spacing:-0.951px;left:179.4px;">Track 2</span>
<span class="t" id="t42" style="top:188.73px;font-size:10px;color:#8a8a94;font-weight:400;letter-spacing:-0.340px;left:179.4px;">2 notes</span>
<span class="t" id="t43" style="top:197.66px;font-size:9.5px;color:#d4d4d8;font-weight:400;letter-spacing:0.000px;left:265.9px;transform:translateX(-50%);">M</span>
<span class="t" id="t44" style="top:197.66px;font-size:9.5px;color:#d4d4d8;font-weight:400;letter-spacing:0.000px;left:288.3px;transform:translateX(-50%);">S</span>
<span class="t" id="t45" style="top:214.76px;font-size:9.5px;color:#c4c4cc;font-weight:400;letter-spacing:-0.432px;right:854.25px;margin-right:0.432px;">100%</span>
<span class="t" id="t46" style="top:179.13px;font-size:10px;color:#ffffff;font-weight:700;letter-spacing:-0.574px;left:316.5px;">Track 2</span>
<span class="t" id="t47" style="top:235.04px;font-size:12px;color:#fafafa;font-weight:700;letter-spacing:-0.951px;left:179.4px;">Track 3</span>
<span class="t" id="t48" style="top:252.73px;font-size:10px;color:#8a8a94;font-weight:400;letter-spacing:-0.340px;left:179.4px;">2 notes</span>
<span class="t" id="t49" style="top:261.66px;font-size:9.5px;color:#d4d4d8;font-weight:400;letter-spacing:0.000px;left:265.9px;transform:translateX(-50%);">M</span>
<span class="t" id="t50" style="top:261.66px;font-size:9.5px;color:#d4d4d8;font-weight:400;letter-spacing:0.000px;left:288.3px;transform:translateX(-50%);">S</span>
<span class="t" id="t51" style="top:278.76px;font-size:9.5px;color:#c4c4cc;font-weight:400;letter-spacing:-0.432px;right:854.25px;margin-right:0.432px;">100%</span>
<span class="t" id="t52" style="top:243.13px;font-size:10px;color:#ffffff;font-weight:700;letter-spacing:-0.574px;left:479.5px;">Track 3</span>
<span class="t" id="t53" style="top:299.04px;font-size:12px;color:#fafafa;font-weight:700;letter-spacing:-0.951px;left:179.4px;">Track 4</span>
<span class="t" id="t54" style="top:316.74px;font-size:10px;color:#8a8a94;font-weight:400;letter-spacing:-0.340px;left:179.4px;">2 notes</span>
<span class="t" id="t55" style="top:325.66px;font-size:9.5px;color:#d4d4d8;font-weight:400;letter-spacing:0.000px;left:265.9px;transform:translateX(-50%);">M</span>
<span class="t" id="t56" style="top:325.66px;font-size:9.5px;color:#d4d4d8;font-weight:400;letter-spacing:0.000px;left:288.3px;transform:translateX(-50%);">S</span>
<span class="t" id="t57" style="top:342.76px;font-size:9.5px;color:#c4c4cc;font-weight:400;letter-spacing:-0.432px;right:854.25px;margin-right:0.432px;">100%</span>
<span class="t" id="t58" style="top:307.14px;font-size:10px;color:#ffffff;font-weight:700;letter-spacing:-0.574px;left:316.5px;">Track 4</span>
<span class="t" id="t59" style="top:363.04px;font-size:12px;color:#fafafa;font-weight:700;letter-spacing:-0.442px;left:179.4px;">Beat 5</span>
<span class="t" id="t60" style="top:380.74px;font-size:10px;color:#8a8a94;font-weight:400;letter-spacing:-0.340px;left:179.4px;">0 notes</span>
<span class="t" id="t61" style="top:389.66px;font-size:9.5px;color:#d4d4d8;font-weight:400;letter-spacing:0.000px;left:265.9px;transform:translateX(-50%);">M</span>
<span class="t" id="t62" style="top:389.66px;font-size:9.5px;color:#d4d4d8;font-weight:400;letter-spacing:0.000px;left:288.3px;transform:translateX(-50%);">S</span>
<span class="t" id="t63" style="top:406.76px;font-size:9.5px;color:#c4c4cc;font-weight:400;letter-spacing:-0.432px;right:854.25px;margin-right:0.432px;">100%</span>
<span class="t" id="t64" style="top:371.14px;font-size:10px;color:#ffffff;font-weight:700;letter-spacing:-0.112px;left:316.5px;">Beat 5</span>
</div></body></html>
